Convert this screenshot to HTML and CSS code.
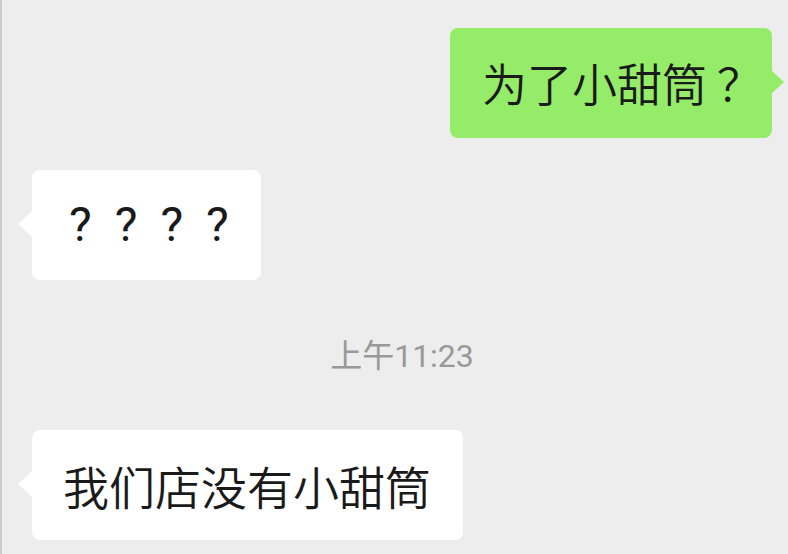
FILE: index.html
```html
<!DOCTYPE html>
<html lang="zh-CN">
<head>
    <meta charset="UTF-8">
    <meta name="viewport" content="width=device-width, initial-scale=1.0">
    <title>聊天</title>
    <link rel="stylesheet" href="styles.css">
</head>
<body>
    <div class="chat">
        <!-- my message -->
        <div class="row row-me">
            <div class="bubble bubble-me">为了小甜筒<span class="punct">？</span></div>
        </div>

        <div class="row row-other">
            <div class="bubble bubble-other q-marks">????</div>
        </div>

        <div class="time">上午11:23</div>

        <div class="row row-other">
            <div class="bubble bubble-other big">我们店没有小甜筒</div>
        </div>
    </div>
</body>
</html>
```

FILE: styles.css
```css
html, body {
    margin: 0;
    padding: 0;
    background-color: #ededed;
}

body {
    font-family: "Noto Sans CJK SC", "Noto Sans", sans-serif;
    color: #1a1a1a;
    height: 554px;
    overflow: hidden;
}

.chat {
    display: flex;
    flex-direction: column;
    height: 100%;
    border-left: 2px solid #cdcdcd;
    box-sizing: border-box;
    padding-top: 28px;
}

.row {
    display: flex;
}

.row-me {
    justify-content: flex-end;
    padding-right: 16px;
}

.row-other {
    justify-content: flex-start;
    padding-left: 30px;
    margin-top: 32px;
}

.bubble {
    position: relative;
    font-size: 45px;
    font-weight: 350;
    line-height: 46px;
    padding: 32px 32px 32px 32px;
    border-radius: 8px;
}

.bubble::before {
    content: "";
    position: absolute;
    top: 41px;
    width: 14px;
    height: 26px;
}

.bubble-me {
    background-color: #95ec69;
    padding-right: 10px;
}

.bubble-me::before {
    right: -12px;
    background-color: #95ec69;
    clip-path: polygon(0 0, 100% 50%, 0 100%);
}

.punct {
    margin-left: 10px;
}

.bubble-other {
    background-color: #ffffff;
}

.bubble-other::before {
    left: -14px;
    background-color: #ffffff;
    clip-path: polygon(100% 0, 0 50%, 100% 100%);
}

.q-marks {
    font-family: "Roboto", sans-serif;
    font-size: 48px;
    font-weight: 400;
    letter-spacing: 23px;
    padding-left: 37px;
    padding-right: 9px;
    height: 46px;
    line-height: 46px;
    padding-top: 32px;
    padding-bottom: 32px;
}

.big {
    font-size: 46px;
    padding-left: 31px;
    padding-right: 32px;
}

.time {
    text-align: center;
    font-family: "Roboto", "Noto Sans CJK SC", sans-serif;
    font-size: 32px;
    color: #999999;
    margin-top: 56px;
    padding-left: 14px;
    line-height: 40px;
}

.time + .row-other {
    margin-top: 54px;
}
```
